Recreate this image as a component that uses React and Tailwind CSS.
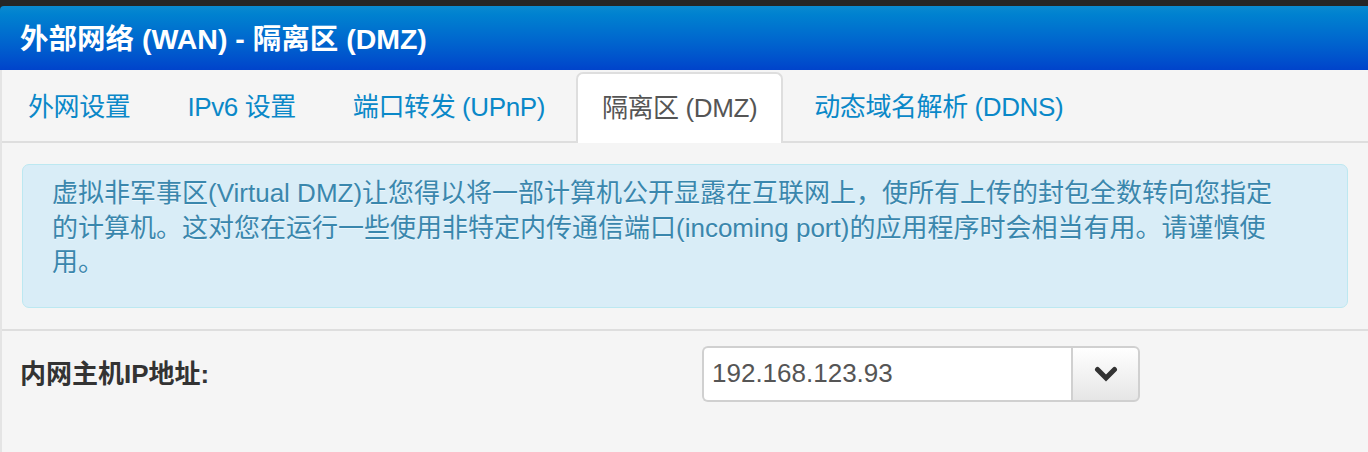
import { useState } from 'react';

const tabs = [
  { id: 'wan', label: '外网设置' },
  { id: 'ipv6', label: 'IPv6 设置' },
  { id: 'upnp', label: '端口转发 (UPnP)' },
  { id: 'dmz', label: '隔离区 (DMZ)' },
  { id: 'ddns', label: '动态域名解析 (DDNS)' },
];

function ChevronDown() {
  return (
    <svg width="24" height="16" viewBox="0 0 24 16" fill="none">
      <path d="M3.5 3.5 L12 12 L20.5 3.5" stroke="#333" strokeWidth="5" strokeLinecap="round" strokeLinejoin="miter" />
    </svg>
  );
}

export default function App() {
  const [active, setActive] = useState('dmz');
  const [host, setHost] = useState('192.168.123.93');

  return (
    <div className="w-[1368px] h-[452px] overflow-hidden bg-[#262626] pt-[6px] font-['Liberation_Sans','Noto_Sans_CJK_SC',sans-serif]">
      {/* Title bar */}
      <div className="h-[64px] rounded-tl-[4px] bg-gradient-to-b from-[#0a8ad0] to-[#0043cb] flex items-center pl-[20px] pt-[3px]">
        <h1 className="text-white font-bold text-[28.5px] leading-none">外部网络 (WAN) - 隔离区 (DMZ)</h1>
      </div>

      <div className="h-full bg-[#f5f5f5] border-l-2 border-[#e4e4e4]">
        {/* Tabs */}
        <ul className="h-[73px] flex items-end border-b-2 border-[#dedede]">
          {tabs.map((tab) => (
            <li key={tab.id} className="mr-[5px] -mb-[2px]">
              <button
                onClick={() => setActive(tab.id)}
                className={
                  tab.id === active
                    ? 'h-[71px] px-[24px] text-[26px] tracking-[-0.4px] text-[#555] bg-white border-2 border-b-0 border-[#dedede] rounded-t-[7px]'
                    : 'h-[71px] px-[26px] text-[26px] tracking-[-0.4px] text-[#0a88c8]'
                }
              >
                {tab.label}
              </button>
            </li>
          ))}
        </ul>

        {/* Info */}
        <div className="mx-[20px] mt-[21px] bg-[#d9edf7] border border-[#bce8f1] rounded-[7px] pl-[29px] pr-[64px] pt-[11px] pb-[27px]">
          <p className="text-[26px] leading-[34.5px] text-[#3a87ad] [text-shadow:0_1px_0_rgba(255,255,255,0.5)]">
            虚拟非军事区(Virtual DMZ)让您得以将一部计算机公开显露在互联网上，使所有上传的封包全数转向您指定的计算机。这对您在运行一些使用非特定内传通信端口(incoming port)的应用程序时会相当有用。请谨慎使用。
          </p>
        </div>

        {/* Form row */}
        <div className="mt-[21px] border-t-2 border-[#dedede] pt-[15px] pl-[18px] flex items-center">
          <label className="w-[682px] text-[26px] font-bold text-[#333] pt-[2px]">内网主机IP地址:</label>
          <div className="flex h-[56px]">
            <input
              value={host}
              onChange={(e) => setHost(e.target.value)}
              className="w-[369px] h-full bg-white border-2 border-r-0 border-[#d0d0d0] rounded-l-[6px] pl-[8px] text-[26px] text-[#555] outline-none"
            />
            <button className="w-[69px] h-full flex items-center justify-center border-2 border-[#d0d0d0] rounded-r-[6px] bg-gradient-to-b from-white to-[#e6e6e6]">
              <ChevronDown />
            </button>
          </div>
        </div>
      </div>
    </div>
  );
}
